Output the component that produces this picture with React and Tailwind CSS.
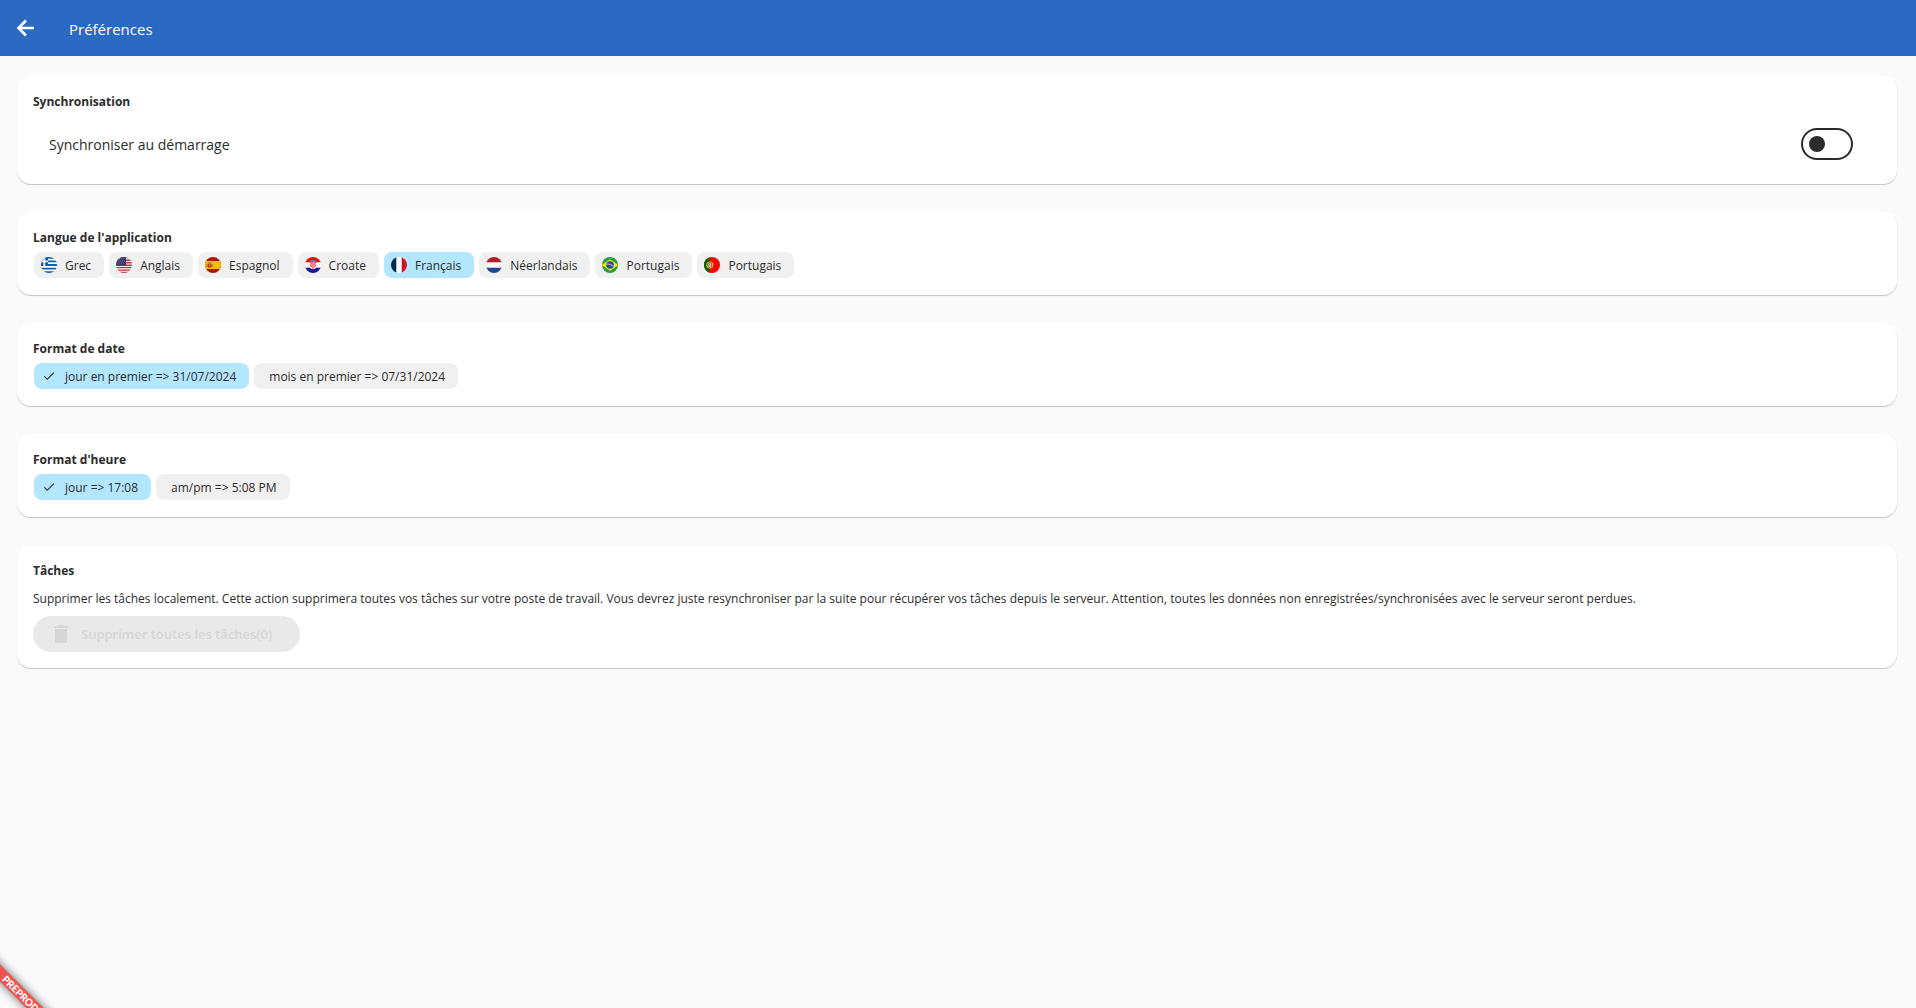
import React, { useState } from 'react';
import { MdCheck, MdDelete } from 'react-icons/md';

const GreekFlag = () => (
  <>
    <rect width="16" height="16" fill="#fff" />
    <path d="M0 0h16v1.8H0zM0 3.5h16v1.8H0zM0 7.1h16v1.8H0zM0 10.7h16v1.8H0zM0 14.2h16V16H0z" fill="#0d5eaf" />
    <rect width="7" height="8.9" fill="#0d5eaf" />
    <path d="M2.4 0h1.8v8.9H2.4zM0 3.5h7v1.8H0z" fill="#fff" />
  </>
);

const UsFlag = () => (
  <>
    <rect width="16" height="16" fill="#fff" />
    <path d="M0 0h16v1.3H0zM0 2.6h16v1.3H0zM0 5.1h16v1.3H0zM0 7.6h16v1.3H0zM0 10h16v1.3H0zM0 12.4h16v1.3H0zM0 14.8h16V16H0z" fill="#bf2e45" />
    <rect width="10" height="8.6" fill="#3c3b6e" />
    <path d="M3 2h.6M5 2h.6M7 2h.6M2 4h.6M4 4h.6M6 4h.6M8 4h.6M1 6h.6M3 6h.6M5 6h.6M7 6h.6" stroke="#a5a4c0" strokeWidth=".6" />
  </>
);

const SpanishFlag = () => (
  <>
    <rect width="16" height="16" fill="#aa151b" />
    <rect y="4" width="16" height="8" fill="#f1bf00" />
    <rect x="2.6" y="6.4" width="4" height="4" rx="1" fill="#ad3a22" />
    <path d="M3.2 5.6h2.8M1.8 6.8v3.4M7.4 6.8v3.4" stroke="#b0703c" strokeWidth=".8" />
    <rect x="4.2" y="7.4" width="1.2" height="1.4" fill="#d9b7b0" />
  </>
);

const CroatianFlag = () => (
  <>
    <rect width="16" height="16" fill="#fff" />
    <rect width="16" height="5.3" fill="#f00" />
    <rect y="10.7" width="16" height="5.3" fill="#171796" />
    <path d="M5 4.6h6v4.6a3 3 0 0 1-6 0z" fill="#fff" />
    <path d="M5 4.6h1.2v1.4H5zM7.4 4.6h1.2v1.4H7.4zM9.8 4.6H11v1.4H9.8zM6.2 6h1.2v1.4H6.2zM8.6 6h1.2v1.4H8.6zM5 7.4h1.2v1.4H5zM7.4 7.4h1.2v1.4H7.4zM9.8 7.4H11v1.4H9.8zM6.2 8.8h1.2v1.4H6.2zM8.6 8.8h1.2v1.4H8.6zM7.4 10.2h1.2v1.6H7.4z" fill="#f00" />
    <path d="M4.8 4.4l.4-1.6 1.2.6L8 2.6l1.6.8 1.2-.6.4 1.6z" fill="#3f7fc4" />
  </>
);

const FrenchFlag = () => (
  <>
    <rect width="16" height="16" fill="#fff" />
    <rect width="5.3" height="16" fill="#002654" />
    <rect x="10.7" width="5.3" height="16" fill="#ce1126" />
  </>
);

const DutchFlag = () => (
  <>
    <rect width="16" height="16" fill="#fff" />
    <rect width="16" height="5.3" fill="#ae1c28" />
    <rect y="10.7" width="16" height="5.3" fill="#21468b" />
  </>
);

const BrazilianFlag = () => (
  <>
    <rect width="16" height="16" fill="#229e45" />
    <path d="M8 2.2L16.4 8 8 13.8-.4 8z" fill="#f8e509" />
    <circle cx="8" cy="8" r="3.8" fill="#2b49a3" />
    <path d="M4.4 7.2c2.6-.5 5 .3 7 2.4" stroke="#dfe5f2" strokeWidth=".8" fill="none" />
  </>
);

const PortugueseFlag = () => (
  <>
    <rect width="16" height="16" fill="#f00" />
    <rect width="5.6" height="16" fill="#006600" />
    <circle cx="5.8" cy="8" r="3" fill="none" stroke="#d9c322" strokeWidth="1.2" />
    <path d="M4.2 6.2h3.2v2.4a1.6 1.6 0 0 1-3.2 0z" fill="#fff" stroke="#e0302a" strokeWidth=".6" />
    <rect x="5.3" y="7" width="1" height="1.8" fill="#3c5aa6" />
  </>
);

const languages = [
  { id: 'el', label: 'Grec', Flag: GreekFlag },
  { id: 'en', label: 'Anglais', Flag: UsFlag },
  { id: 'es', label: 'Espagnol', Flag: SpanishFlag },
  { id: 'hr', label: 'Croate', Flag: CroatianFlag },
  { id: 'fr', label: 'Français', Flag: FrenchFlag },
  { id: 'nl', label: 'Néerlandais', Flag: DutchFlag },
  { id: 'pt-br', label: 'Portugais', Flag: BrazilianFlag },
  { id: 'pt', label: 'Portugais', Flag: PortugueseFlag },
];

const dateFormats = [
  { id: 'dmy', label: 'jour en premier => 31/07/2024' },
  { id: 'mdy', label: 'mois en premier => 07/31/2024' },
];

const timeFormats = [
  { id: '24h', label: 'jour => 17:08' },
  { id: '12h', label: 'am/pm => 5:08 PM' },
];

const Card = ({ title, children }) => (
  <section className="rounded-[14px] bg-white p-4 shadow-[0_1px_1px_rgba(0,0,0,0.22)]">
    <h2 className="text-xs leading-5 font-bold">{title}</h2>
    {children}
  </section>
);

const Chip = ({ selected, onClick, Flag, children }) => {
  const hasIcon = Flag || selected;
  return (
    <button
      type="button"
      aria-pressed={selected}
      onClick={onClick}
      className={`flex h-[26px] items-center gap-2 rounded-lg pr-[13px] text-xs whitespace-nowrap ${hasIcon ? 'pl-[7px]' : 'pl-[15px]'} ${selected ? 'bg-[#b3e7ff]' : 'bg-[#f0f0f0]'}`}
    >
      {Flag && (
        <svg viewBox="0 0 16 16" className="size-4 rounded-full" aria-hidden="true">
          <Flag />
        </svg>
      )}
      {!Flag && selected && <MdCheck className="mx-px size-[14px]" />}
      <span className="pt-0.5">{children}</span>
    </button>
  );
};

const ChipGroup = ({ options, value, onChange }) => (
  <div className="mt-1 mb-px ml-px flex flex-wrap gap-[5px]">
    {options.map((o) => (
      <Chip key={o.id} Flag={o.Flag} selected={o.id === value} onClick={() => onChange(o.id)}>
        {o.label}
      </Chip>
    ))}
  </div>
);

const App = () => {
  const [syncOnStart, setSyncOnStart] = useState(false);
  const [language, setLanguage] = useState('fr');
  const [dateFormat, setDateFormat] = useState('dmy');
  const [timeFormat, setTimeFormat] = useState('24h');

  return (
    <div className="relative min-h-screen overflow-hidden bg-[#fafafa] font-['Open_Sans','Noto_Sans',sans-serif] text-[#2b2b2b]">
      <header className="flex h-14 items-center gap-8 bg-[#2c69c3] px-[13px] text-white">
        <button type="button" aria-label="Retour">
          <svg viewBox="0 0 24 24" className="size-6" fill="none" stroke="currentColor" strokeWidth="2.6" aria-hidden="true">
            <path d="M21 12H6M13 4.5L5.5 12l7.5 7.5" />
          </svg>
        </button>
        <h1 className="pt-0.5 text-[15px]">Préférences</h1>
      </header>

      <main className="flex flex-col gap-7 pt-5 pr-[19px] pl-[17px]">
        <Card title="Synchronisation">
          <div className="mt-2 flex h-12 items-center justify-between pr-7 pl-4">
            <label htmlFor="sync" className="pt-0.5 text-sm">Synchroniser au démarrage</label>
            <input
              id="sync"
              type="checkbox"
              role="switch"
              checked={syncOnStart}
              onChange={(e) => setSyncOnStart(e.target.checked)}
              className="flex h-8 w-[52px] appearance-none items-center rounded-full border-2 border-[#2b2b2b] px-[6px] before:size-4 before:rounded-full before:bg-[#2b2b2b] checked:justify-end"
            />
          </div>
        </Card>

        <Card title="Langue de l'application">
          <ChipGroup options={languages} value={language} onChange={setLanguage} />
        </Card>

        <Card title="Format de date">
          <ChipGroup options={dateFormats} value={dateFormat} onChange={setDateFormat} />
        </Card>

        <Card title="Format d'heure">
          <ChipGroup options={timeFormats} value={timeFormat} onChange={setTimeFormat} />
        </Card>

        <Card title="Tâches">
          <p className="mt-2 text-xs leading-5">
            Supprimer les tâches localement. Cette action supprimera toutes vos tâches sur votre poste de travail. Vous devrez juste resynchroniser par la suite pour récupérer vos tâches depuis le serveur. Attention, toutes les données non enregistrées/synchronisées avec le serveur seront perdues.
          </p>
          <button
            type="button"
            disabled
            className="mt-[7px] flex h-9 items-center gap-2 rounded-full bg-[#e9e9e9] pr-7 pl-4 text-[13px] font-semibold text-[#d6d6d6]"
          >
            <MdDelete className="size-6" />
            <span className="pt-0.5">Supprimer toutes les tâches(0)</span>
          </button>
        </Card>
      </main>

      {/* environment ribbon */}
      <div className="absolute bottom-[11px] -left-8 h-3 w-[100px] rotate-45 bg-[#ee5350] pl-2 text-center font-['Lato',sans-serif] text-[10px] leading-3 font-black text-white shadow-[0_0_10px_rgba(0,0,0,0.6)]">
        PREPROD
      </div>
    </div>
  );
};

export default App;
